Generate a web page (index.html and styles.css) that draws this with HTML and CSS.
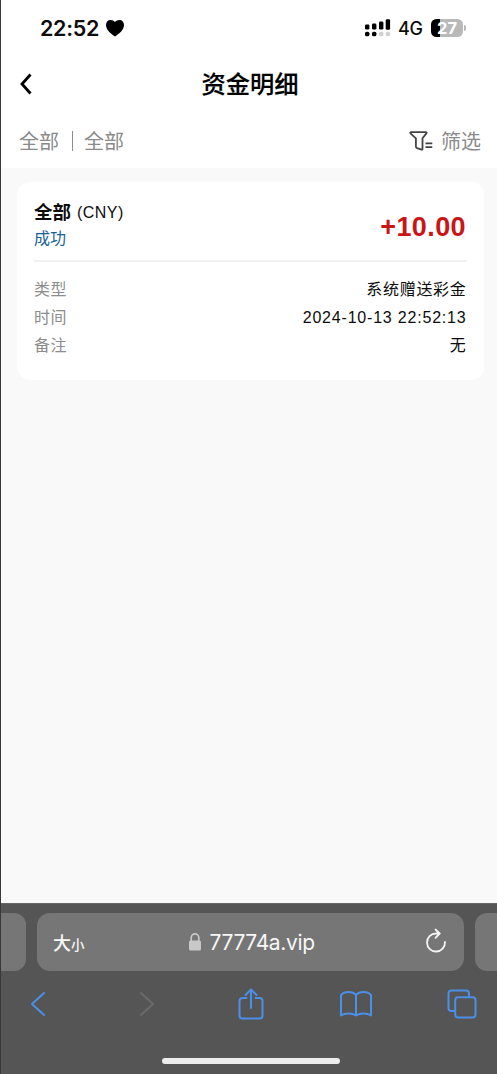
FILE: index.html
```html
<!DOCTYPE html>
<html lang="zh-CN">
<head>
<meta charset="utf-8">
<meta name="viewport" content="width=device-width, initial-scale=1">
<title>资金明细</title>
<link rel="stylesheet" href="styles.css">
</head>
<body>
<div class="phone">
  <header class="top">
    <div class="status">
      <span class="clock">22:52</span>
      <svg class="heart" width="20" height="18" viewBox="0 0 20 18"><path d="M10 17.400C7.500 15.600 1 11.500 1 5.900 1 3 3 1 5.500 1 7.500 1 9.200 1.800 10 3 10.800 1.800 12.500 1 14.500 1 17 1 19 3 19 5.900 19 11.500 12.500 15.600 10 17.400Z"/></svg>
      <svg class="signal" width="26" height="18" viewBox="0 0 26 18">
        <rect x="0" y="5.500" width="4.400" height="5" rx="1.300"/><rect x="7" y="4.500" width="4.400" height="6" rx="1.300"/><rect x="14" y="2.500" width="4.400" height="8" rx="1.300"/><rect x="20.700" y="0.300" width="4.400" height="10.500" rx="1.300"/>
        <rect x="0" y="12.700" width="4.400" height="4.600" rx="1.600"/><rect x="7" y="12.700" width="4.400" height="4.600" rx="1.600"/><g fill="#d2d2d2"><rect x="14" y="12.700" width="4.400" height="4.600" rx="1.600"/><rect x="20.700" y="12.700" width="4.400" height="4.600" rx="1.600"/></g>
      </svg>
      <span class="network">4G</span>
      <span class="battery">27</span><span class="battery-tip"></span>
    </div>
    <div class="title-bar">
      <svg class="back" width="14" height="22" viewBox="0 0 14 22"><path d="M11.500 1.500 3 11l8.500 9.500"/></svg>
      <h1 class="title">资金明细</h1>
    </div>
    <div class="filters">
      <span class="filter-kind">全部</span><span class="filter-line"></span><span class="filter-kind">全部</span>
      <svg class="funnel" width="25" height="20" viewBox="0 0 25 20"><path d="M2.200 1.200h14.600q1.200 0 .6 1.200L13.500 7.300v10.500q0 1-1 .9l-4.500-1.600q-1.100-.4-1.100-1.500V7.300L1.500 2.400Q.9 1.200 2.200 1.200ZM16.500 12.300h6.800M16.500 16.200h6.800"/></svg>
      <span class="filter-kind">筛选</span>
    </div>
  </header>
  <main class="content">
    <section class="card">
      <div class="summary">
        <div>
          <div class="account"><b class="account-name">全部</b><span class="currency">(CNY)</span></div>
          <div class="state">成功</div>
        </div>
        <strong class="amount">+10.00</strong>
      </div>
      <dl class="details">
        <div class="row"><dt>类型</dt><dd>系统赠送彩金</dd></div>
        <div class="row"><dt>时间</dt><dd class="date">2024-10-13 22:52:13</dd></div>
        <div class="row"><dt>备注</dt><dd>无</dd></div>
      </dl>
    </section>
  </main>
  <footer class="browser">
    <div class="tabs">
      <div class="tab-edge tab-previous"></div>
      <div class="address">
        <span class="size-big">大</span><span class="size-small">小</span>
        <svg class="lock" width="14" height="18" viewBox="0 0 14 18"><path d="M3.200 8V4.700a3.800 3.800 0 0 1 7.600 0V8" fill="none" stroke="#c8c8c8" stroke-width="1.700"/><rect x="1" y="7.500" width="12" height="10" rx="1.600" fill="#c8c8c8"/></svg>
        <span class="host">77774a.vip</span>
        <svg class="reload" width="22" height="26" viewBox="0 0 22 26"><path d="M14 5.500H11A9 9 0 1 0 20 14M10.500 1.500l4.200 4-4.200 4.300"/></svg>
      </div>
      <div class="tab-edge tab-next"></div>
    </div>
    <nav class="tools">
      <svg width="16" height="26" viewBox="0 0 16 26"><path d="M14 2 2 13l12 11"/></svg>
      <svg class="forward" width="16" height="26" viewBox="0 0 16 26"><path d="M2 2l12 11L2 24"/></svg>
      <svg class="share" width="26" height="32" viewBox="0 0 26 32"><path d="M8.500 10H5Q1.500 10 1.500 13v14.500q0 3 3 3h17q3 0 3-3V13q0-3-3-3h-4M13 20V1.800M7.500 7 13 1.500 18.500 7"/></svg>
      <svg class="book" width="34" height="26" viewBox="0 0 34 26"><path d="M17 4Q14.500 1 9.500 1T2 4v20.500q3-2 7.500-2T17 24.500q3-2 7.500-2t7.500 2V4q-2.500-3-7.500-3T17 4ZM17 4V24.500"/></svg>
      <svg class="pages" width="30" height="30" viewBox="0 0 30 30"><path d="M8 22H4.500q-3 0-3-3V4.500q0-3 3-3H19q3 0 3 3V8"/><rect x="8.200" y="8.200" width="20.300" height="20.300" rx="3"/></svg>
    </nav>
    <div class="home"></div>
  </footer>
</div>
</body>
</html>
```
FILE: styles.css
```css
* { box-sizing: border-box; }
body { margin: 0; font-family: "Liberation Sans", "Noto Sans CJK SC", sans-serif; color: #0c0c0c; }
svg { display: block; flex: none; }
.phone { display: flex; flex-direction: column; width: 497px; height: 1074px; border-left: 1px solid #39393b; background: #f9f9f9; overflow: hidden; }
.top { flex: none; height: 168px; background: #fff; }
.status { display: flex; align-items: center; height: 56px; padding: 0 31px 0 39px; font-family: Inter, sans-serif; white-space: nowrap; }
.clock { width: 60px; font-size: 21.5px; font-weight: 600; letter-spacing: -.3px; }
.heart { margin-left: 5px; }
.signal { margin-left: auto; }
.network { width: 25px; margin: 1px 8px 0 7px; font-size: 18px; font-weight: 500; letter-spacing: -.3px; }
.battery { width: 32px; height: 18px; border-radius: 5.5px; background: linear-gradient(90deg, #000 27%, #b9b9b9 27%); color: #fff; font-size: 16.5px; font-weight: 700; line-height: 18px; text-align: center; }
.battery-tip { width: 2px; height: 6px; margin-left: 1px; border-radius: 0 2px 2px 0; background: #b9b9b9; }
.title-bar { display: grid; grid-template-columns: 60px 1fr 60px; align-items: center; height: 56px; }
.back { margin-left: 18px; fill: none; stroke: #000; stroke-width: 2.8; }
.title { margin: -3px 0 0 2px; font-size: 24.300px; font-weight: 500; text-align: center; color: #000; -webkit-text-stroke: .2px #000; }
.filters { display: flex; align-items: center; height: 57px; padding: 0 15px 0 18px; color: #8a8a8a; font-size: 20px; font-weight: 400; line-height: 28px; }
.filter-kind { width: 41px; margin-top: 2px; }
.filter-line { width: 1px; height: 20px; margin: 0 11px 0 12px; background: #8d8d8d; }
.funnel { margin: 0 7px 0 auto; fill: none; stroke: #444; stroke-width: 1.8; stroke-linejoin: round; }
.content { flex: 1; padding: 14px 13px 0 16px; }
.card { height: 198px; padding: 0 17px; border-radius: 13px; background: #fff; }
.summary { display: flex; justify-content: space-between; height: 80px; padding-top: 17px; border-bottom: 2px solid #f2f2f2; }
.account { display: flex; align-items: center; height: 27px; }
.account-name { margin-top: -4px; font-size: 18.500px; }
.currency { margin: 0 0 0 6px; font-size: 16px; letter-spacing: .45px; }
.state { height: 26px; color: #166198; font-size: 16px; line-height: 26px; }
.amount { margin: 12px 1px 0 0; color: #ca1516; font-size: 27px; line-height: 32px; letter-spacing: .4px; }
.details { margin: 0; padding-top: 14px; font-size: 16px; line-height: 28px; }
.row { display: flex; justify-content: space-between; }
.row dt { color: #8c8c8c; letter-spacing: .5px; }
.row dd { margin: 0; letter-spacing: .7px; margin-right: .5px; }
.row .date { letter-spacing: .8px; }
.browser { flex: none; height: 171px; background: #555; border-top: 1px solid #666; }
.tabs { display: flex; padding-top: 9px; }
.tab-edge { height: 58px; background: #767676; }
.tab-previous { width: 25px; margin-right: 11px; border-radius: 0 12px 12px 0; }
.tab-next { flex: 1; margin-left: 11px; border-radius: 12px 0 0 12px; }
.address { display: flex; align-items: center; width: 427px; height: 58px; padding: 0 17px 0 16px; border-radius: 13px; background: #767676; color: #f7f7f7; }
.size-big { font-size: 18px; font-weight: 500; }
.size-small { margin-top: 4px; font-size: 13.500px; font-weight: 500; }
.lock { margin-left: 103px; }
.host { margin: 1px 0 0 8px; font-family: Inter, sans-serif; font-size: 21px; letter-spacing: -.35px; }
.reload { margin: -3px 0 0 auto; fill: none; stroke: #f5f5f5; stroke-width: 1.8; stroke-linecap: round; }
.tools { display: flex; align-items: center; height: 65px; padding-left: 29px; fill: none; stroke: #4a8fe8; stroke-width: 2; stroke-linecap: round; stroke-linejoin: round; }
.forward { margin-left: 93px; stroke: #6a6a6a; }
.share { margin-left: 83px; }
.book { margin-left: 75px; }
.pages { margin-left: 74px; }
.home { width: 178px; height: 6px; margin: 22px 0 0 161px; border-radius: 4px; background: #ededed; }
```
